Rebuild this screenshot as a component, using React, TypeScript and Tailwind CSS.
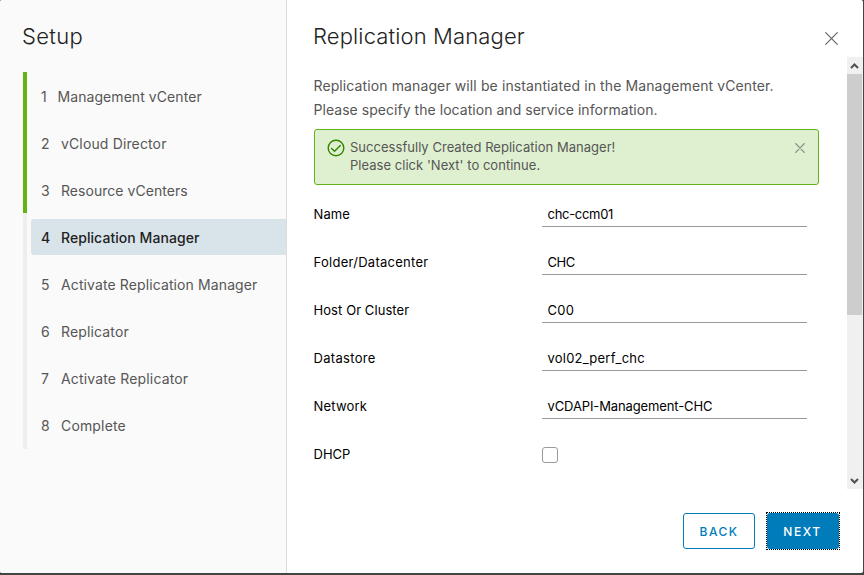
import React from "react";

const steps = [
  { label: "Management vCenter", numWidth: "w-[5.5px]", track: "tracking-[0.07px]" },
  { label: "vCloud Director", numWidth: "w-[9px]", track: "tracking-[0.14px]" },
  { label: "Resource vCenters", numWidth: "w-[9px]", track: "tracking-[0.04px]" },
  { label: "Replication Manager", numWidth: "w-[9px]", track: "tracking-[0.06px]" },
  { label: "Activate Replication Manager", numWidth: "w-[9px]", track: "tracking-[0.11px]" },
  { label: "Replicator", numWidth: "w-[9px]", track: "tracking-[0.15px]" },
  { label: "Activate Replicator", numWidth: "w-[9px]", track: "tracking-[0.16px]" },
  { label: "Complete", numWidth: "w-[9px]", track: "tracking-[0.16px]" },
];

const CURRENT = 3;

const fields = [
  { label: "Name", value: "chc-ccm01", lt: "tracking-[0.1px]", vt: "tracking-[-0.3px]" },
  { label: "Folder/Datacenter", value: "CHC", lt: "tracking-[0.27px]", vt: "tracking-[-0.5px]" },
  { label: "Host Or Cluster", value: "C00", lt: "tracking-[0.08px]", vt: "tracking-[0.3px]" },
  { label: "Datastore", value: "vol02_perf_chc", lt: "tracking-[0.32px]", vt: "tracking-[0.23px]" },
  { label: "Network", value: "vCDAPI-Management-CHC", lt: "tracking-[0.2px]", vt: "tracking-[-0.12px]" },
];

function Sidebar() {
  return (
    <aside className="flex w-[287px] shrink-0 flex-col border-r border-[#dddddd] bg-[#fafafa] pl-[23px]">
      <h1 className="mt-[20px] -ml-px h-[32px] text-[22px] leading-[32px] font-light tracking-[0.35px] text-[#222]">
        Setup
      </h1>
      <ol className="mt-[20px] flex flex-col">
        {steps.map((s, i) => (
          <li
            key={s.label}
            className={`flex h-[47px] items-center border-l-4 pl-1 last:h-12 last:pb-px ${
              i < CURRENT ? "border-[#60b515]" : "border-[#eeeeee]"
            }`}
          >
            <div
              className={`mt-px flex h-9 flex-1 items-center gap-[11px] rounded-l-[3px] pl-[10px] text-[14px] ${
                i === CURRENT ? "bg-[#d9e4ea] font-medium text-[#222]" : "text-[#565656]"
              }`}
            >
              <span className={s.numWidth}>{i + 1}</span>
              <span className={s.track}>{s.label}</span>
            </div>
          </li>
        ))}
      </ol>
    </aside>
  );
}

function Cross({ size, color }: { size: number; color: string }) {
  return (
    <svg width={size} height={size} viewBox={`0 0 ${size} ${size}`} stroke={color} strokeWidth="1.2" strokeLinecap="round">
      <path d={`M0.7 0.7L${size - 0.7} ${size - 0.7}M${size - 0.7} 0.7L0.7 ${size - 0.7}`} />
    </svg>
  );
}

function Alert() {
  return (
    <div className="flex h-[56px] w-[505px] rounded-[3px] border border-[#60b515] bg-[#dff0d0] pt-[8px] pl-[12px]">
      <svg className="mt-px shrink-0" width="18" height="18" viewBox="0 0 18 18" fill="none" stroke="#318700" strokeWidth="1.4">
        <circle cx="9" cy="9" r="7.8" />
        <path d="M4.6 9.4L7.6 12.3L13.3 6.5" strokeLinecap="round" />
      </svg>
      <p className="ml-[5px] flex-1 text-[13px] leading-[18px] tracking-[0.03px] text-[#565656]">
        <span>Successfully Created Replication Manager!</span>
        <br />
        <span>Please click 'Next' to continue.</span>
      </p>
      <div className="mt-[5px] mr-[13px]">
        <Cross size={10} color="#7f8a78" />
      </div>
    </div>
  );
}

function Scrollbar() {
  return (
    <div className="flex h-[432px] w-4 flex-col bg-[#f0f0f0]">
      <div className="flex h-[17px] justify-center pt-[6px] pr-px">
        <svg width="9" height="6" viewBox="0 0 9 6" fill="none" stroke="#505050" strokeWidth="2">
          <path d="M1 5L4.5 1.5L8 5" />
        </svg>
      </div>
      <div className="h-[241px] w-[15px] bg-[#cdcdcd]" />
      <div className="mt-auto flex h-[17px] justify-center pt-[6px] pr-px">
        <svg width="9" height="6" viewBox="0 0 9 6" fill="none" stroke="#505050" strokeWidth="2">
          <path d="M1 1L4.5 4.5L8 1" />
        </svg>
      </div>
    </div>
  );
}

export default function App() {
  return (
    <div className="h-[575px] w-[864px] overflow-hidden bg-[#444] pr-px pb-[2px] font-['Inter',sans-serif]">
      <div className="flex h-full overflow-hidden rounded-[2px] bg-white">
        <Sidebar />
        <main className="flex flex-1 flex-col">
          <header className="flex h-[57px] justify-between pl-[26px]">
            <h2 className="mt-[20px] text-[22px] leading-[32px] font-light tracking-[0.14px] text-[#222]">
              Replication Manager
            </h2>
            <button className="mt-[32px] mr-[25px] h-[13px] w-[13px]">
              <Cross size={13} color="#666" />
            </button>
          </header>
          <div className="flex h-[432px] justify-between">
            <div className="pt-[17px] pl-[27px]">
              <p className="mb-[7px] -ml-[0.5px] text-[14px] leading-6 whitespace-nowrap text-[#565656]">
                <span className="tracking-[0.11px]">Replication manager will be instantiated in the Management vCenter.</span>
                <br />
                <span className="tracking-[0.04px]">Please specify the location and service information.</span>
              </p>
              <Alert />
              <div className="mt-[17px] flex flex-col">
                {fields.map((f) => (
                  <div key={f.label} className="-ml-[0.5px] flex h-12 items-start text-[13px] leading-6 text-black">
                    <span className={`w-[228.5px] ${f.lt}`}>{f.label}</span>
                    <span className={`h-[25px] w-[265px] border-b border-[#9a9a9a] pl-[5.5px] ${f.vt}`}>{f.value}</span>
                  </div>
                ))}
                <div className="-ml-[0.5px] flex h-10 items-start text-[13px] leading-6 text-black">
                  <span className="w-[228.5px]">DHCP</span>
                  <span className="mt-[5px] h-4 w-4 rounded-[3px] border border-[#9a9a9a]" />
                </div>
              </div>
            </div>
            <Scrollbar />
          </div>
          <footer className="mt-[23px] mr-[23px] flex items-center justify-end gap-[11px] text-[12px] font-medium">
            <button className="h-9 w-[72px] rounded-[3px] border border-[#007cbb] pt-[2px] tracking-[1.5px] text-[#007cbb]">
              BACK
            </button>
            <button className="h-[38px] w-[74px] border border-dotted border-black p-0">
              <span className="flex h-9 items-center justify-center rounded-[3px] bg-[#007cbb] pt-[2px] pr-px tracking-[1.6px] text-white">
                NEXT
              </span>
            </button>
          </footer>
        </main>
      </div>
    </div>
  );
}
